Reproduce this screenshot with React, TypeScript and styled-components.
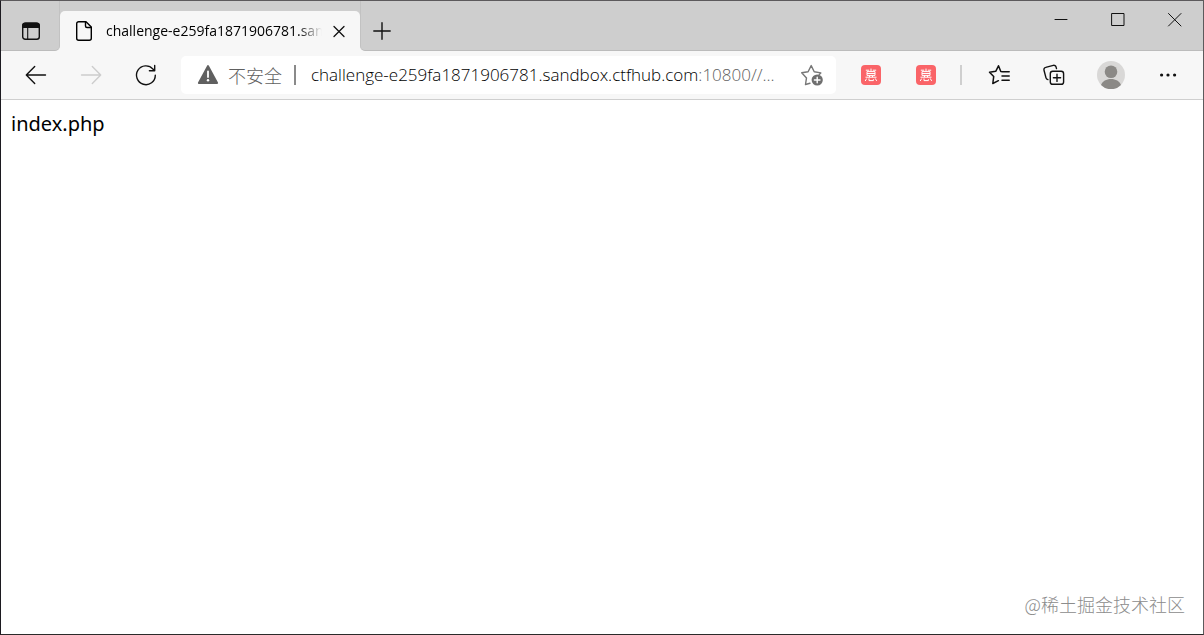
import React from "react";
import styled, { createGlobalStyle } from "styled-components";

const GlobalStyle = createGlobalStyle`
  * { box-sizing: border-box; }
  html, body, #root { height: 100%; }
  body {
    margin: 0;
    background: #ffffff;
    color: #000000;
    font-family: "Noto Sans", "Open Sans", "Noto Sans CJK SC", sans-serif;
  }
`;

const Window = styled.div`
  display: flex;
  flex-direction: column;
  min-height: 100%;
  border: 1px solid #5c5a5c;
  border-left-color: #1c1a20;
  border-bottom-color: #2b2a2a;
`;

const TabStrip = styled.header`
  display: flex;
  height: 50px;
  background: linear-gradient(#cecece 40px, #f7f7f7 40px);
`;

const StripLead = styled.div`
  display: flex;
  flex: none;
  align-items: flex-end;
  width: 59px;
  padding-left: 3px;
  border-right: 1px solid #c2c2c2;
  border-bottom: 1px solid #bcbcbc;
  border-bottom-right-radius: 5px;
  background: #cecece;
`;

const StripTail = styled.div`
  display: flex;
  flex: 1;
  align-items: flex-end;
  justify-content: space-between;
  border-left: 1px solid #c2c2c2;
  border-bottom: 1px solid #bcbcbc;
  border-bottom-left-radius: 5px;
  background: #cecece;
`;

const IconButton = styled.button<{ $width?: number; $faded?: boolean }>`
  display: flex;
  flex: none;
  align-items: center;
  justify-content: center;
  width: ${(p) => p.$width ?? 54}px;
  height: 38px;
  padding: 0;
  border: 0;
  background: transparent;
  color: ${(p) => (p.$faded ? "#cdcdcd" : "#111111")};
`;

const Tab = styled.div`
  display: flex;
  flex: 0 1 300px;
  align-items: center;
  min-width: 0;
  margin-top: 10px;
  padding: 0 4px 0 12px;
  border-radius: 5px 5px 0 0;
  background: #f7f7f7;
`;

const TabTitle = styled.span`
  flex: 1;
  min-width: 0;
  margin-left: 10px;
  overflow: hidden;
  font-family: "Open Sans", "Noto Sans", sans-serif;
  font-size: 14px;
  line-height: 20px;
  white-space: nowrap;
  mask-image: linear-gradient(to right, #000 calc(100% - 24px), transparent);
`;

const WindowControls = styled.div`
  display: flex;
  align-self: flex-start;
`;

const Toolbar = styled.nav`
  display: flex;
  align-items: center;
  height: 49px;
  padding: 0 8px;
  border-bottom: 1px solid #cfcfcf;
  background: #f7f7f7;
`;

const ButtonGroup = styled.div`
  display: flex;
  flex: none;
  align-items: center;
  gap: 1px;
`;

const AddressBar = styled.div`
  display: flex;
  flex: 1;
  align-items: center;
  min-width: 0;
  height: 38px;
  margin: 0 8px;
  padding-left: 15px;
  border-radius: 5px;
  background: #ffffff;
`;

const Security = styled.button`
  display: flex;
  flex: none;
  align-items: center;
  gap: 8px;
  padding: 0;
  border: 0;
  background: transparent;
  color: #606060;
  font-family: "Noto Sans CJK SC", sans-serif;
  font-size: 18px;
  font-weight: 300;
  line-height: 24px;
`;

const Divider = styled.span<{ $color: string; $space: string }>`
  flex: none;
  width: 2px;
  height: 20px;
  margin: ${(p) => p.$space};
  background: ${(p) => p.$color};
`;

const Address = styled.label`
  display: flex;
  flex: 1;
  align-items: center;
  min-width: 0;
  overflow: hidden;
  color: #606060;
  font-family: "Open Sans", "Noto Sans", sans-serif;
  font-size: 17px;
  font-weight: 300;
  line-height: 24px;
  white-space: nowrap;
`;

const HostInput = styled.input`
  field-sizing: content;
  padding: 0;
  border: 0;
  outline: 0;
  background: transparent;
  color: #000000;
  font: inherit;
`;

const Page = styled.main`
  display: flex;
  flex: 1;
  flex-direction: column;
  justify-content: space-between;
  padding: 10px 18px 16px 10px;
  background: #ffffff;
`;

const Listing = styled.p`
  margin: 0;
  font-family: "Noto Sans", sans-serif;
  font-size: 20px;
  line-height: 28px;
`;

const Watermark = styled.span`
  align-self: flex-end;
  color: #8c8c8c;
  font-family: "Noto Sans CJK SC", sans-serif;
  font-size: 18px;
  font-weight: 300;
  line-height: 28px;
`;

type IconProps = { stroke?: number; children: React.ReactNode };

const Icon = ({ stroke = 1.4, children }: IconProps) => (
  <svg
    width="24"
    height="24"
    viewBox="0 0 24 24"
    fill="none"
    stroke="currentColor"
    strokeWidth={stroke}
    strokeLinecap="round"
    strokeLinejoin="round"
    aria-hidden="true"
  >
    {children}
  </svg>
);

const CouponIcon = () => (
  <svg width="20" height="20" viewBox="0 0 20 20" fill="none" aria-hidden="true">
    <rect width="20" height="20" rx="4" fill="#fa6468" />
    <path
      d="M4.800 5.200h3.400M11.800 5.200h3.400M10 3.600v3M6 6.600h8v3.800H6zM6 8.500h8M8.500 10.400v1.800M11.500 10.400v1.800M4.500 12.200h11M5.600 13.600l-1.400 2.400M8 13.400v2.200h4.400v-1.400M14.200 13.400l1.500 2.500"
      stroke="#ffffff"
      strokeWidth="1"
    />
  </svg>
);

export default function App() {
  return (
    <>
      <GlobalStyle />
      <Window>
        <TabStrip>
          <StripLead>
            <IconButton aria-label="Tab actions">
              <Icon>
                <rect x="3.7" y="4.2" width="16.6" height="16" rx="2.5" />
                <path d="M3 7.5a4 4 0 0 1 4-4h10a4 4 0 0 1 4 4v1.4H3z" fill="currentColor" stroke="none" />
                <path d="M8.7 9v11" strokeWidth="1.1" />
              </Icon>
            </IconButton>
          </StripLead>
          <Tab>
            <Icon>
              <path d="M14 2.7H6.7a2 2 0 0 0-2 2v14.6a2 2 0 0 0 2 2h10.6a2 2 0 0 0 2-2V8z" />
              <path d="M13.500 3v4a1.500 1.500 0 0 0 1.500 1.500h4" />
            </Icon>
            <TabTitle>challenge-e259fa1871906781.sandbox.ctfhub.com</TabTitle>
            <IconButton $width={34} aria-label="Close tab">
              <Icon stroke={1.3}>
                <path d="M7 7.5l10 10M17 7.5l-10 10" />
              </Icon>
            </IconButton>
          </Tab>
          <StripTail>
            <IconButton $width={41} aria-label="New tab">
              <Icon>
                <path d="M12 3.8v16.4M3.8 12h16.4" />
              </Icon>
            </IconButton>
            <WindowControls>
              <IconButton $width={57} aria-label="Minimize">
                <Icon stroke={1}>
                  <path d="M6 11.5h12" />
                </Icon>
              </IconButton>
              <IconButton $width={57} aria-label="Maximize">
                <Icon stroke={1}>
                  <path d="M6 5.5h12v12H6z" strokeLinejoin="miter" />
                </Icon>
              </IconButton>
              <IconButton $width={57} aria-label="Close window">
                <Icon stroke={1}>
                  <path d="M5.5 5.5l12.500 12.500M18 5.500L5.500 18" />
                </Icon>
              </IconButton>
            </WindowControls>
          </StripTail>
        </TabStrip>
        <Toolbar>
          <ButtonGroup>
            <IconButton aria-label="Back">
              <Icon>
                <path d="M21.500 12H2.500M10.700 3.600L2.300 12l8.400 8.400" />
              </Icon>
            </IconButton>
            <IconButton $faded aria-label="Forward">
              <Icon>
                <path d="M2.500 12h19M13.300 3.600l8.400 8.400-8.400 8.400" />
              </Icon>
            </IconButton>
            <IconButton aria-label="Refresh">
              <Icon>
                <path d="M21.300 12.200a9.400 9.400 0 1 1-2.300-6.100l1.600 1.400M20.700 2.400v5.300h-5.300" />
              </Icon>
            </IconButton>
          </ButtonGroup>
          <AddressBar>
            <Security>
              <Icon stroke={1.8}>
                <path d="M12 3L21.200 20H2.800z" fill="currentColor" />
                <path d="M12 8.500v5.500" stroke="#ffffff" />
                <circle cx="12" cy="17.300" r="1.200" fill="#ffffff" stroke="none" />
              </Icon>
              不安全
            </Security>
            <Divider $color="#8a8a8a" $space="0 15px 0 12px" />
            <Address>
              <HostInput
                aria-label="Address"
                defaultValue="challenge-e259fa1871906781.sandbox.ctfhub.com"
              />
              <span>:10800//...</span>
            </Address>
            <IconButton $width={48} aria-label="Add this page to favorites">
              <Icon>
                <g stroke="#777777">
                  <path d="M10 20.300l-4.500 1.200 1-6.600L1.700 9.800l6.400-1L11.200 2.600l3 6.200 6.600 1.100-1.600 1.700" />
                </g>
                <circle cx="17.200" cy="17" r="5.600" fill="#6f6f6f" stroke="none" />
                <path d="M17.200 14.200v5.600M14.400 17H20" stroke="#ffffff" />
              </Icon>
            </IconButton>
          </AddressBar>
          <ButtonGroup>
            <IconButton aria-label="Coupons">
              <CouponIcon />
            </IconButton>
            <IconButton aria-label="Shopping deals">
              <CouponIcon />
            </IconButton>
          </ButtonGroup>
          <Divider $color="#cfcfcf" $space="0 10px 0 7px" />
          <ButtonGroup>
            <IconButton aria-label="Favorites">
              <Icon stroke={1.5}>
                <path d="M15 8.700h7.200M15.500 8.700l-1.700-.2L11.500 2.800 8.700 8.300 2.500 9.200l4.200 4.400-.9 6.900 5.600-2.800M15 13h7.200M15 17.200h7.200" />
              </Icon>
            </IconButton>
            <IconButton aria-label="Collections">
              <Icon>
                <rect x="8.300" y="8.300" width="13.300" height="13" rx="2.400" />
                <path d="M15 11.200v7.200M11.400 14.800h7.200M5.900 16.600a2.400 2.400 0 0 1-1.900-1.800L2 7.200a2.300 2.300 0 0 1 1.700-2.800l7.600-2a2.300 2.300 0 0 1 2.800 1.700l.4 1.500" />
              </Icon>
            </IconButton>
            <IconButton $width={58} aria-label="Profile">
              <svg width="28" height="28" viewBox="0 0 28 28" aria-hidden="true">
                <circle cx="14" cy="14" r="14" fill="#d9d8d7" />
                <circle cx="14" cy="10.800" r="6.300" fill="#8b8986" />
                <path d="M4 24c1.300-3.700 5.300-6 10-6s8.700 2.300 10 6a14 14 0 0 1-20 0z" fill="#8b8986" />
              </svg>
            </IconButton>
            <IconButton aria-label="Settings and more">
              <Icon>
                <g fill="currentColor" stroke="none">
                  <circle cx="5.600" cy="12" r="1.600" />
                  <circle cx="12" cy="12" r="1.600" />
                  <circle cx="18.600" cy="12" r="1.600" />
                </g>
              </Icon>
            </IconButton>
          </ButtonGroup>
        </Toolbar>
        <Page>
          <Listing>index.php</Listing>
          <Watermark>@稀土掘金技术社区</Watermark>
        </Page>
      </Window>
    </>
  );
}
